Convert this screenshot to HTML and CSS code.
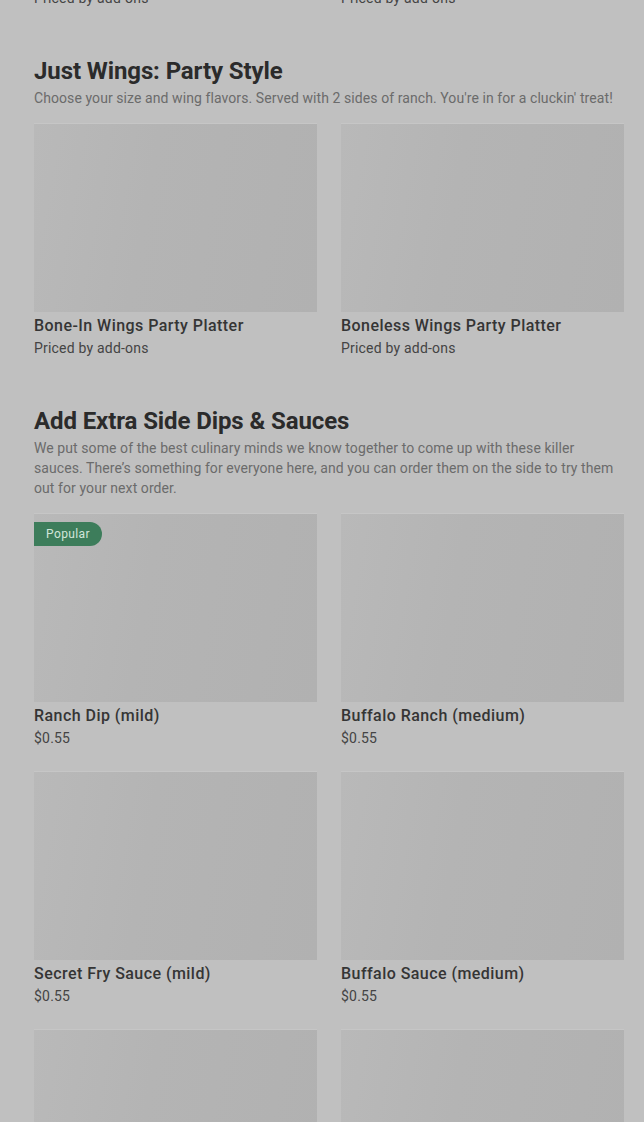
FILE: index.html
```html
<!DOCTYPE html>
<html lang="en">
<head>
<meta charset="utf-8">
<title>Menu</title>
<link rel="stylesheet" href="styles.css">
</head>
<body>
<main class="menu">
  <div class="grid prev">
    <div class="card-meta"><p class="card-sub">Priced by add-ons</p></div>
    <div class="card-meta"><p class="card-sub">Priced by add-ons</p></div>
  </div>

  <section class="category">
    <h2 class="cat-title">Just Wings: Party Style</h2>
    <p class="cat-desc">Choose your size and wing flavors. Served with 2 sides of ranch. You're in for a cluckin' treat!</p>
    <div class="grid">
      <article class="card">
        <div class="card-img"></div>
        <h3 class="card-title">Bone-In Wings Party Platter</h3>
        <p class="card-sub">Priced by add-ons</p>
      </article>
      <article class="card">
        <div class="card-img"></div>
        <h3 class="card-title">Boneless Wings Party Platter</h3>
        <p class="card-sub">Priced by add-ons</p>
      </article>
    </div>
  </section>

  <section class="category">
    <h2 class="cat-title">Add Extra Side Dips &amp; Sauces</h2>
    <p class="cat-desc">We put some of the best culinary minds we know together to come up with these killer sauces. There’s something for everyone here, and you can order them on the side to try them out for your next order.</p>
    <div class="grid">
      <article class="card">
        <div class="card-img"><span class="badge">Popular</span></div>
        <h3 class="card-title">Ranch Dip (mild)</h3>
        <p class="card-sub">$0.55</p>
      </article>
      <article class="card">
        <div class="card-img"></div>
        <h3 class="card-title">Buffalo Ranch (medium)</h3>
        <p class="card-sub">$0.55</p>
      </article>
      <article class="card">
        <div class="card-img"></div>
        <h3 class="card-title">Secret Fry Sauce (mild)</h3>
        <p class="card-sub">$0.55</p>
      </article>
      <article class="card">
        <div class="card-img"></div>
        <h3 class="card-title">Buffalo Sauce (medium)</h3>
        <p class="card-sub">$0.55</p>
      </article>
      <article class="card">
        <div class="card-img"></div>
        <h3 class="card-title">Honey Mustard (mild)</h3>
        <p class="card-sub">$0.55</p>
      </article>
      <article class="card">
        <div class="card-img"></div>
        <h3 class="card-title">Hot Sauce (hot)</h3>
        <p class="card-sub">$0.55</p>
      </article>
    </div>
  </section>
</main>
</body>
</html>
```

FILE: styles.css
```css
html, body {
  margin: 0;
  padding: 0;
  background: #c0c0c0;
  height: 100%;
  overflow: hidden;
}

body {
  font-family: Roboto, "Liberation Sans", sans-serif;
  color: #2e2e2e;
}

.menu {
  padding: 0 20px 0 34px;
  margin-top: -12px;
}

.grid {
  display: grid;
  grid-template-columns: 1fr 1fr;
  column-gap: 24px;
  row-gap: 24px;
}

.category {
  padding-top: 47px;
}

.cat-title {
  margin: 0;
  font-size: 24px;
  line-height: 32px;
  font-weight: 700;
  letter-spacing: -0.1px;
  color: #2b2b2b;
}

.cat-desc {
  margin: 1px 0 16px;
  font-size: 14px;
  line-height: 20px;
  color: #6b6b6b;
  letter-spacing: 0.08px;
}

.card-img {
  position: relative;
  height: 188px;
  background: linear-gradient(100deg, #b9b9b9 0%, #b4b4b4 40%, #b1b1b1 100%);
  box-shadow: 0 -1px 0 #c6c6c6;
}

.badge {
  position: absolute;
  top: 8px;
  left: 0;
  height: 24px;
  line-height: 24px;
  padding: 0 12px;
  font-size: 12px;
  letter-spacing: 0.4px;
  color: #d2e6da;
  background: #3d7d5b;
  border-radius: 0 12px 12px 0;
}

.card-title {
  margin: 0;
  padding-top: 2px;
  font-size: 16px;
  line-height: 24px;
  font-weight: 500;
  letter-spacing: 0.45px;
  color: #353535;
}

.card-sub {
  margin: 0;
  font-size: 14px;
  line-height: 20px;
  letter-spacing: 0.2px;
  color: #444444;
}
```
